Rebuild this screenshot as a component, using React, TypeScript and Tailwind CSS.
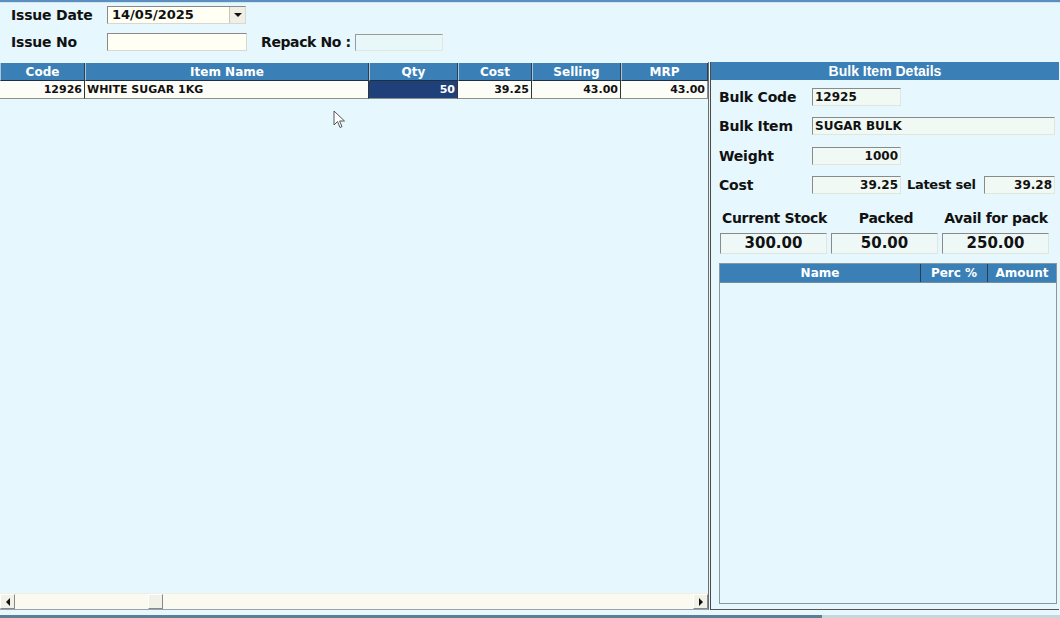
import React from 'react';

const font = "font-['DejaVu_Sans',Verdana,sans-serif]";

const columns = [
  { label: 'Code', w: 'w-[85px]' },
  { label: 'Item Name', w: 'w-[284px]' },
  { label: 'Qty', w: 'w-[89px]' },
  { label: 'Cost', w: 'w-[74px]' },
  { label: 'Selling', w: 'w-[89px]' },
  { label: 'MRP', w: 'w-[87px]' }
];

function Field({
  w,
  value,
  align = 'left',
  bg = 'bg-[#f1f9f4]'
}: {
  w: string;
  value?: string;
  align?: 'left' | 'right';
  bg?: string;
}) {
  return (
    <div
      className={`${w} h-[18px] ${bg} border border-t-[#8a8a8a] border-l-[#8a8a8a] border-b-[#dfe6dc] border-r-[#dfe6dc] flex items-center px-[2px] text-[12px] font-bold text-[#111] whitespace-nowrap ${
        align === 'right' ? 'justify-end' : 'justify-start'
      }`}>
      {value}
    </div>
  );
}

export default function App() {
  return (
    <div
      className={`${font} relative w-[1060px] h-[618px] overflow-hidden bg-[#e6f8fd] flex flex-col text-[#111] whitespace-nowrap`}>
      {/* top bar */}
      <div className="h-[2px] bg-[#5b8fc0]" />
      <div className="h-px bg-[#cfe6f1]" />

      {/* header form */}
      <div className="h-[59px] flex flex-col pt-[3px]">
        <div className="flex items-center h-[18px]">
          <div className="w-[107px] pl-[11px] text-[14px] font-bold tracking-[-0.2px]">Issue Date</div>
          <div className="w-[139px] h-[18px] bg-[#fffff4] border border-t-[#8a8a8a] border-l-[#8a8a8a] border-b-[#d8d8d0] border-r-[#d8d8d0] flex items-center">
            <span className="flex-1 pl-[4px] text-[13px] font-bold">14/05/2025</span>
            <div className="w-[16px] h-[16px] bg-[#efefe6] border-l border-[#c7c7bc] flex items-center justify-center">
              <div className="w-0 h-0 border-l-[4px] border-r-[4px] border-t-[4px] border-l-transparent border-r-transparent border-t-[#111]" />
            </div>
          </div>
        </div>
        <div className="flex items-center h-[18px] mt-[9px]">
          <div className="w-[107px] pl-[11px] text-[14px] font-bold tracking-[-0.2px]">Issue No</div>
          <div className="w-[140px] h-[18px] bg-[#fffff4] border border-t-[#8a8a8a] border-l-[#8a8a8a] border-b-[#d8d8d0] border-r-[#d8d8d0]" />
          <div className="ml-[14px] w-[94px] text-[14px] font-bold tracking-[-0.4px]">Repack No :</div>
          <div className="w-[88px] h-[17px] bg-[#e8f8f8] border border-t-[#9a9a9a] border-l-[#9a9a9a] border-b-[#e2e8dc] border-r-[#e2e8dc]" />
        </div>
      </div>

      {/* main area */}
      <div className="flex h-[548px]">
        {/* left grid */}
        <div className="w-[709px] flex flex-col border-r border-[#6d6d6d] border-b border-b-[#9aa4a8]">
          <div className="flex h-[18px] mt-px">
            {columns.map((c) => (
              <div
                key={c.label}
                className={`${c.w} h-full bg-[#3b7fb7] text-white text-[12px] font-bold flex items-center justify-center border-r border-r-[#2c3e50] border-l border-l-[#a9c6de] border-b border-b-[#1f2f40]`}>
                {c.label}
              </div>
            ))}
            <div className="flex-1 bg-[#e6f8fd]" />
          </div>
          <div className="flex h-[18px] text-[11px] font-bold">
            <div className="w-[85px] bg-[#fdfdf7] border-r border-[#333] border-b border-b-[#8e8e8e] flex items-center justify-end pr-[2px] pt-[2px]">12926</div>
            <div className="w-[284px] bg-[#fdfdf7] border-r border-[#333] border-b border-b-[#8e8e8e] flex items-center pl-[2px] pt-[2px]">WHITE SUGAR 1KG</div>
            <div className="w-[89px] bg-[#1f4079] text-white border-r border-[#333] border-b border-b-[#8e8e8e] flex items-center justify-end pr-[2px] pt-[2px]">50</div>
            <div className="w-[74px] bg-[#fdfdf7] border-r border-[#333] border-b border-b-[#8e8e8e] flex items-center justify-end pr-[2px] pt-[2px]">39.25</div>
            <div className="w-[89px] bg-[#fdfdf7] border-r border-[#333] border-b border-b-[#8e8e8e] flex items-center justify-end pr-[2px] pt-[2px]">43.00</div>
            <div className="w-[87px] bg-[#fdfdf7] border-r border-[#8e8e8e] border-b border-b-[#8e8e8e] flex items-center justify-end pr-[2px] pt-[2px]">43.00</div>
          </div>
          <div className="flex-1" />
          {/* horizontal scrollbar */}
          <div className="h-[16px] bg-[#fafaf1] flex items-stretch border-t border-[#eef0e6]">
            <div className="w-[15px] bg-[#f1f1e8] border border-t-white border-l-white border-b-[#888] border-r-[#888] flex items-center justify-center">
              <div className="w-0 h-0 border-t-[4px] border-b-[4px] border-r-[4px] border-t-transparent border-b-transparent border-r-[#111]" />
            </div>
            <div className="w-[133px]" />
            <div className="w-[15px] bg-[#f1f1e8] border border-t-white border-l-white border-b-[#888] border-r-[#888]" />
            <div className="flex-1" />
            <div className="w-[15px] bg-[#f1f1e8] border border-t-white border-l-white border-b-[#888] border-r-[#888] flex items-center justify-center">
              <div className="w-0 h-0 border-t-[4px] border-b-[4px] border-l-[4px] border-t-transparent border-b-transparent border-l-[#111]" />
            </div>
          </div>
        </div>

        {/* right panel */}
        <div className="w-[349px] flex flex-col border-l border-[#4a4a4a] border-b border-b-[#555] ml-px">
          <div className="h-[18px] bg-[#3b7fb7] text-white text-[14px] font-bold flex items-center justify-center font-['Liberation_Sans',Arial,sans-serif]">
            Bulk Item Details
          </div>
          <div className="flex flex-col pl-[8px] pr-[2px]">
            <div className="flex items-center h-[18px] mt-[8px]">
              <div className="w-[93px] text-[14px] font-bold tracking-[-0.2px]">Bulk Code</div>
              <Field w="w-[89px]" value="12925" />
            </div>
            <div className="flex items-center h-[18px] mt-[11px]">
              <div className="w-[93px] text-[14px] font-bold tracking-[-0.2px]">Bulk Item</div>
              <Field w="w-[243px]" value="SUGAR BULK" />
            </div>
            <div className="flex items-center h-[18px] mt-[12px]">
              <div className="w-[93px] text-[14px] font-bold tracking-[-0.2px]">Weight</div>
              <Field w="w-[89px]" value="1000" align="right" />
            </div>
            <div className="flex items-center h-[18px] mt-[11px]">
              <div className="w-[93px] text-[14px] font-bold tracking-[-0.2px]">Cost</div>
              <Field w="w-[89px]" value="39.25" align="right" />
              <div className="w-[83px] pl-[6px] text-[13px] font-bold tracking-[-0.3px]">Latest sel</div>
              <Field w="w-[71px]" value="39.28" align="right" />
            </div>
            <div className="grid grid-cols-[111px_112px_108px] mt-[15px] text-[14px] font-bold tracking-[-0.3px] leading-[18px]">
              <div className="text-center">Current Stock</div>
              <div className="text-center">Packed</div>
              <div className="text-center">Avail for pack</div>
            </div>
            <div className="flex gap-[4px] mt-[6px] pl-px">
              {['300.00', '50.00', '250.00'].map((v) => (
                <div
                  key={v}
                  className="w-[107px] h-[21px] bg-[#eef9f7] border border-t-[#8a8a8a] border-l-[#8a8a8a] border-b-[#dfe6dc] border-r-[#dfe6dc] flex items-center justify-center text-[15px] font-bold">
                  {v}
                </div>
              ))}
            </div>
          </div>
          {/* sub grid */}
          <div className="ml-[8px] mr-[2px] mt-[9px] h-[341px] border border-[#8a9a9a] flex flex-col">
            <div className="flex h-[18px] text-white text-[12px] font-bold">
              <div className="w-[201px] bg-[#3b7fb7] border-r border-[#2c3e50] flex items-center justify-center">Name</div>
              <div className="w-[67px] bg-[#3b7fb7] border-r border-[#2c3e50] flex items-center justify-center">Perc %</div>
              <div className="flex-1 bg-[#3b7fb7] flex items-center justify-center">Amount</div>
            </div>
            <div className="flex-1 border-t border-[#6f8fa0] bg-[#e6f8fd]" />
          </div>
        </div>
      </div>

      {/* bottom tab strip */}
      <div className="flex-1 flex flex-col">
        <div className="flex-1" />
        <div className="flex h-[3px]">
          <div className="w-[822px] bg-[#5d7f94]" />
          <div className="flex-1 bg-[#c8d6da]" />
        </div>
      </div>

      {/* mouse cursor */}
      <svg
        className="absolute left-[333px] top-[110px]"
        width="13"
        height="19"
        viewBox="0 0 13 19">
        <path
          d="M1 1 L1 15 L4.5 11.5 L7 17.5 L9 16.6 L6.6 11 L11.5 11 Z"
          fill="#fff"
          stroke="#555"
          strokeWidth="1"
          strokeLinejoin="round"
        />
      </svg>
    </div>
  );
}
